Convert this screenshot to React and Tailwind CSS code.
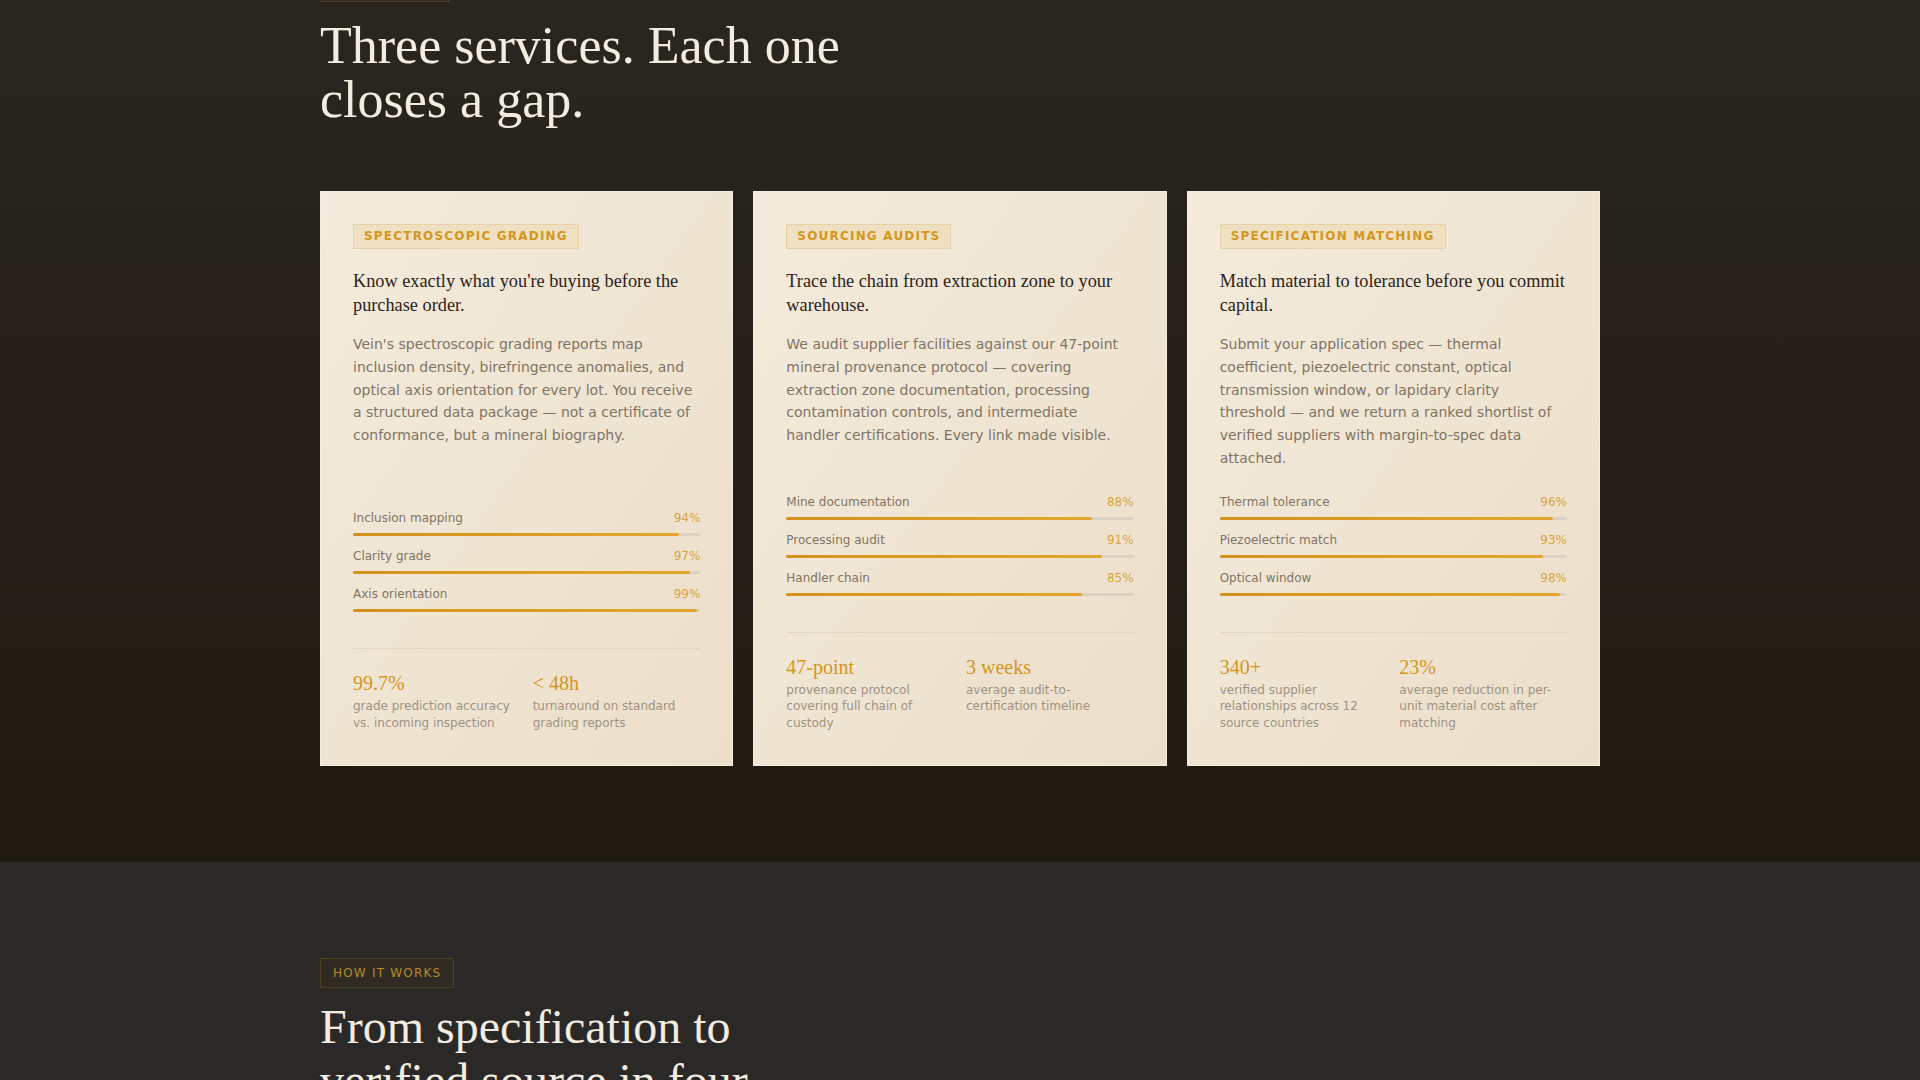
import React from "react";

const services = [
  {
    tag: "SPECTROSCOPIC GRADING",
    title: "Know exactly what you're buying before the purchase order.",
    body: "Vein's spectroscopic grading reports map inclusion density, birefringence anomalies, and optical axis orientation for every lot. You receive a structured data package — not a certificate of conformance, but a mineral biography.",
    metrics: [
      ["Inclusion mapping", 94],
      ["Clarity grade", 97],
      ["Axis orientation", 99],
    ],
    stats: [
      ["99.7%", "grade prediction accuracy vs. incoming inspection"],
      ["< 48h", "turnaround on standard grading reports"],
    ],
  },
  {
    tag: "SOURCING AUDITS",
    title: "Trace the chain from extraction zone to your warehouse.",
    body: "We audit supplier facilities against our 47-point mineral provenance protocol — covering extraction zone documentation, processing contamination controls, and intermediate handler certifications. Every link made visible.",
    metrics: [
      ["Mine documentation", 88],
      ["Processing audit", 91],
      ["Handler chain", 85],
    ],
    stats: [
      ["47-point", "provenance protocol covering full chain of custody"],
      ["3 weeks", "average audit-to-certification timeline"],
    ],
  },
  {
    tag: "SPECIFICATION MATCHING",
    title: "Match material to tolerance before you commit capital.",
    body: "Submit your application spec — thermal coefficient, piezoelectric constant, optical transmission window, or lapidary clarity threshold — and we return a ranked shortlist of verified suppliers with margin-to-spec data attached.",
    metrics: [
      ["Thermal tolerance", 96],
      ["Piezoelectric match", 93],
      ["Optical window", 98],
    ],
    stats: [
      ["340+", "verified supplier relationships across 12 source countries"],
      ["23%", "average reduction in per-unit material cost after matching"],
    ],
  },
];

const Eyebrow = ({ children }) => (
  <span className="block w-fit border border-[#4d3f22] bg-[#2f2a22] px-3 py-1.5 text-xs leading-4 tracking-[0.1em] text-[#b88a2e]">
    {children}
  </span>
);

const ServiceCard = ({ service }) => (
  <div className="flex flex-col border border-[#f6eee0] bg-gradient-to-br from-[#f4ebdc] to-[#ecdfca] p-8 pb-[34px]">
    <span className="block w-fit border border-[#e8d2a8] bg-[#f0e0c2] px-2.5 py-1 text-xs font-bold leading-[15px] tracking-[0.1em] text-[#d4961c]">
      {service.tag}
    </span>
    <h3 className="mt-5 font-['Liberation_Serif',serif] text-[18.3px] leading-6 text-[#2b2319]">
      {service.title}
    </h3>
    <p className="mt-4 text-sm leading-[1.625] text-[#7f7465]">{service.body}</p>

    <div className="mt-auto flex flex-col gap-[11px] pt-[23px]">
      {service.metrics.map(([label, value]) => (
        <div key={label}>
          <div className="flex justify-between text-xs leading-[18px]">
            <span className="text-[#7f7465]">{label}</span>
            <span className="text-[#d9a43c]">{value}%</span>
          </div>
          <div className="mt-1.5 h-[3px] rounded-full bg-[#dcd2c3]">
            <div
              className="h-full rounded-full bg-gradient-to-r from-[#d4921c] to-[#e2a62e]"
              style={{ width: `${value}%` }}
            />
          </div>
        </div>
      ))}
    </div>

    <div className="mt-9 grid grid-cols-2 gap-3 border-t border-[#e3d6c2] pt-[22px]">
      {service.stats.map(([value, text]) => (
        <div key={value}>
          <div className="font-['Liberation_Serif',serif] text-[20px] leading-6 text-[#d4961c]">
            {value}
          </div>
          <p className="mt-[3px] text-xs leading-[16.5px] text-[#9d9282]">{text}</p>
        </div>
      ))}
    </div>
  </div>
);

export default function App() {
  return (
    <div className="-mt-[124px] font-['DejaVu_Sans',sans-serif]">
      <section className="bg-gradient-to-b from-[#2b2722] to-[#1f1a11] pt-24 pb-24">
        <div className="mx-auto max-w-[1280px]">
          <Eyebrow>OUR SERVICES</Eyebrow>
          <h2 className="mt-[17px] max-w-[530px] font-['Liberation_Serif',serif] text-[52px] leading-[54px] text-[#f3ece0]">
            Three services. Each one closes a gap.
          </h2>
          <div className="mt-16 grid grid-cols-3 gap-5">
            {services.map((s) => (
              <ServiceCard key={s.tag} service={s} />
            ))}
          </div>
        </div>
      </section>

      <section className="bg-[#2a2928] pt-24 pb-24">
        <div className="mx-auto max-w-[1280px]">
          <Eyebrow>HOW IT WORKS</Eyebrow>
          <h2 className="mt-3 max-w-[530px] font-['Liberation_Serif',serif] text-[48px] leading-[1.12] text-[#f3ece0]">
            From specification to verified source in four steps.
          </h2>
        </div>
      </section>
    </div>
  );
}
